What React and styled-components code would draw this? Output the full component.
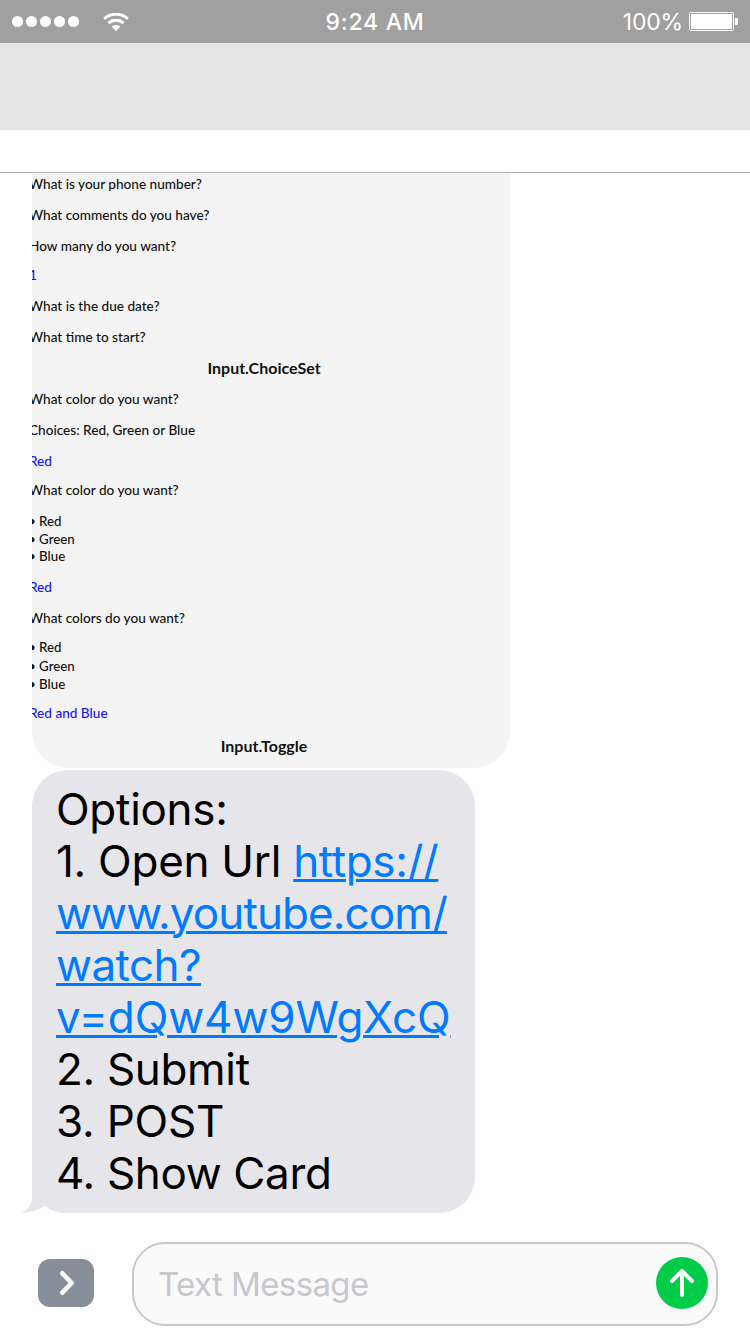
import React from "react";
import styled, { createGlobalStyle } from "styled-components";

const GlobalStyle = createGlobalStyle`
  *, *::before, *::after { box-sizing: border-box; }
  body { margin: 0; background: #fff; font-family: Inter, "Liberation Sans", sans-serif; }
`;

const Screen = styled.main`
  width: 750px;
  height: 1334px;
  display: flex;
  flex-direction: column;
  overflow: hidden;
  background: #fff;
`;

const StatusBar = styled.header`
  flex: none;
  height: 43px;
  padding: 0 12px;
  display: grid;
  grid-template-columns: 1fr auto 1fr;
  align-items: center;
  background: #a0a0a0;
  color: #fff;
`;

const Signal = styled.div`
  display: flex;
  align-items: center;
  gap: 3px;
`;

const Dot = styled.span`
  width: 11px;
  height: 11px;
  border-radius: 50%;
  background: #fff;
`;

const WifiIcon = styled.svg`
  width: 26px;
  height: 18px;
  margin-left: 21px;
`;

const Clock = styled.time`
  padding-top: 2px;
  font-size: 23px;
  font-weight: 500;
  line-height: 41px;
  letter-spacing: 0.75px;
`;

const Power = styled.div`
  display: flex;
  align-items: center;
  justify-content: flex-end;
  gap: 6px;
  font-size: 23px;
  line-height: 41px;
`;

const Percent = styled.span`
  padding-top: 2px;
  letter-spacing: -0.2px;
`;

const BatteryIcon = styled.svg`
  width: 49px;
  height: 19px;
`;

const NavBar = styled.div`
  flex: none;
  height: 87px;
  background: #e5e5e5;
`;

const Subheader = styled.div`
  flex: none;
  height: 43px;
  border-bottom: 1px solid #b2b2b2;
`;

const Thread = styled.section`
  flex: none;
  height: 1040px;
  padding-left: 32px;
  display: flex;
  flex-direction: column;
  align-items: flex-start;
  gap: 2px;
`;

const CardImage = styled.article`
  width: 478px;
  height: 595px;
  padding-top: 2px;
  overflow: hidden;
  border-radius: 0 0 36px 36px;
  background: #f4f4f4;
  font-family: Lato, "Liberation Sans", sans-serif;
`;

const CardLine = styled.p`
  margin: ${(p) => p.$gap ?? 0}px 0 0 ${(p) => p.$indent ?? -3}px;
  font-size: 13.6px;
  font-weight: 500;
  line-height: 18px;
  white-space: pre;
  color: ${(p) => (p.$answer ? "#1414f5" : "#111")};
`;

const CardBullet = styled(CardLine)`
  margin-left: -4px;
  font-size: 13.3px;
`;

const CardTitle = styled(CardLine).attrs({ as: "h3" })`
  width: 478px;
  margin-left: -7px;
  font-size: 16px;
  font-weight: 700;
  text-align: center;
`;

const Bubble = styled.article`
  position: relative;
  width: 443px;
  height: 443px;
  padding: 13px 0 0 24px;
  border-radius: 36px;
  background: #e5e5ea;
  color: #000;
  font-size: 44px;
  line-height: 52px;
`;

const BubbleTail = styled.svg`
  position: absolute;
  left: -11px;
  bottom: 0;
  width: 48px;
  height: 40px;
`;

const BubbleLine = styled.div`
  position: relative;
  white-space: pre;
  letter-spacing: ${(p) => p.$track ?? 0}px;
`;

const Link = styled.a`
  color: #007aff;
  letter-spacing: ${(p) => p.$track ?? 0}px;
  text-decoration: underline;
  text-decoration-thickness: 3px;
  text-underline-offset: 2px;
`;

const Composer = styled.footer`
  flex: none;
  height: 121px;
  padding: 29px 32px 8px 38px;
  display: flex;
  align-items: center;
  gap: 38px;
`;

const ExpandButton = styled.button`
  width: 56px;
  height: 48px;
  margin-bottom: 2px;
  padding: 0;
  border: 0;
  border-radius: 12px;
  background: #868e99;
  svg { display: block; }
`;

const Field = styled.div`
  flex: 1;
  height: 84px;
  padding: 0 8px 0 24px;
  display: flex;
  align-items: center;
  justify-content: space-between;
  border: 2px solid #c7c7cc;
  border-radius: 33px;
  background: #fafafa;
`;

const Placeholder = styled.span`
  color: #c7c7cc;
  font-size: 33px;
  line-height: 40px;
  letter-spacing: -0.6px;
`;

const SendButton = styled.button`
  width: 52px;
  height: 52px;
  margin-bottom: 2px;
  padding: 0;
  border: 0;
  border-radius: 50%;
  background: #00cc47;
  svg { display: block; }
`;

const lineKinds = { text: CardLine, title: CardTitle, bullet: CardBullet };

const cardLines = [
  { text: "What is your phone number?" },
  { text: "What comments do you have?", gap: 13 },
  { text: "How many do you want?", gap: 13 },
  { text: "1", gap: 11, answer: true },
  { text: "What is the due date?", gap: 13 },
  { text: "What time to start?", gap: 13 },
  { text: "Input.ChoiceSet", gap: 13, kind: "title" },
  { text: "What color do you want?", gap: 13 },
  { text: "Choices: Red, Green or Blue", gap: 13 },
  { text: "Red", gap: 13, answer: true },
  { text: "What color do you want?", gap: 11 },
  { text: "• Red", gap: 13, kind: "bullet" },
  { text: "• Green", gap: 0, kind: "bullet" },
  { text: "• Blue", gap: -1, kind: "bullet" },
  { text: "Red", gap: 13, answer: true },
  { text: "What colors do you want?", gap: 13 },
  { text: "• Red", gap: 11, kind: "bullet" },
  { text: "• Green", gap: 1, kind: "bullet" },
  { text: "• Blue", gap: 0, kind: "bullet" },
  { text: "Red and Blue", gap: 11, answer: true },
  { text: "Input.Toggle", gap: 15, kind: "title" },
];

export default function App() {
  return (
    <>
      <GlobalStyle />
      <Screen>
        <StatusBar>
          <Signal>
            {[0, 1, 2, 3, 4].map((i) => <Dot key={i} />)}
            <WifiIcon viewBox="0 0 26 18" fill="none" stroke="#fff" strokeWidth="3">
              <path d="M1.2 5.8C7.8-.2 18.2-.2 24.8 5.8" />
              <path d="M5.4 10.2C9.7 6.2 16.3 6.2 20.6 10.2" />
              <path d="M13 18L8.7 13.8C11 11.4 15 11.4 17.3 13.8Z" fill="#fff" stroke="none" />
            </WifiIcon>
          </Signal>
          <Clock>9:24 AM</Clock>
          <Power>
            <Percent>100%</Percent>
            <BatteryIcon viewBox="0 0 49 19">
              <rect x=".5" y=".5" width="44" height="18" rx="1" fill="none" stroke="#fff" />
              <rect x="2" y="2" width="41" height="15" fill="#fff" />
              <path d="M46 6h2q1 0 1 1v5q0 1-1 1h-2z" fill="#fff" />
            </BatteryIcon>
          </Power>
        </StatusBar>
        <NavBar />
        <Subheader />
        <Thread>
          <CardImage>
            {cardLines.map((l, i) => {
              const Line = lineKinds[l.kind ?? "text"];
              return (
                <Line key={i} $gap={l.gap} $answer={l.answer}>
                  {l.text}
                </Line>
              );
            })}
          </CardImage>
          <Bubble>
            <BubbleTail viewBox="0 0 48 40">
              <path d="M11 0V24C11 32 7 37 0 40H48V0Z" fill="#e5e5ea" />
              <path d="M0 40C10 39.5 18 36.5 24 33C30 37.5 36 40 48 40Z" fill="#fff" />
            </BubbleTail>
            <BubbleLine $track={-0.28}>Options:</BubbleLine>
            <BubbleLine $track={-0.28}>1. Open Url <Link $track={-0.4}>https://</Link></BubbleLine>
            <BubbleLine><Link $track={-0.9}>www.youtube.com/</Link></BubbleLine>
            <BubbleLine><Link $track={-0.55}>watch?</Link></BubbleLine>
            <BubbleLine><Link $track={-0.12}>v=dQw4w9WgXcQ</Link></BubbleLine>
            <BubbleLine $track={-0.33}>2. Submit</BubbleLine>
            <BubbleLine $track={-0.2}>3. POST</BubbleLine>
            <BubbleLine $track={-0.36}>4. Show Card</BubbleLine>
          </Bubble>
        </Thread>
        <Composer>
          <ExpandButton aria-label="Show apps">
            <svg width="56" height="48" viewBox="0 0 56 48" fill="none" stroke="#fff" strokeWidth="4.6" strokeLinecap="round" strokeLinejoin="round">
              <path d="M24.3 14.3L33.7 24L24.3 33.7" />
            </svg>
          </ExpandButton>
          <Field>
            <Placeholder>Text Message</Placeholder>
            <SendButton aria-label="Send">
              <svg width="52" height="52" viewBox="0 0 52 52" fill="none" stroke="#fff" strokeWidth="4" strokeLinecap="round" strokeLinejoin="round">
                <path d="M26 38V14M16 24L26 14L36 24" />
              </svg>
            </SendButton>
          </Field>
        </Composer>
      </Screen>
    </>
  );
}
